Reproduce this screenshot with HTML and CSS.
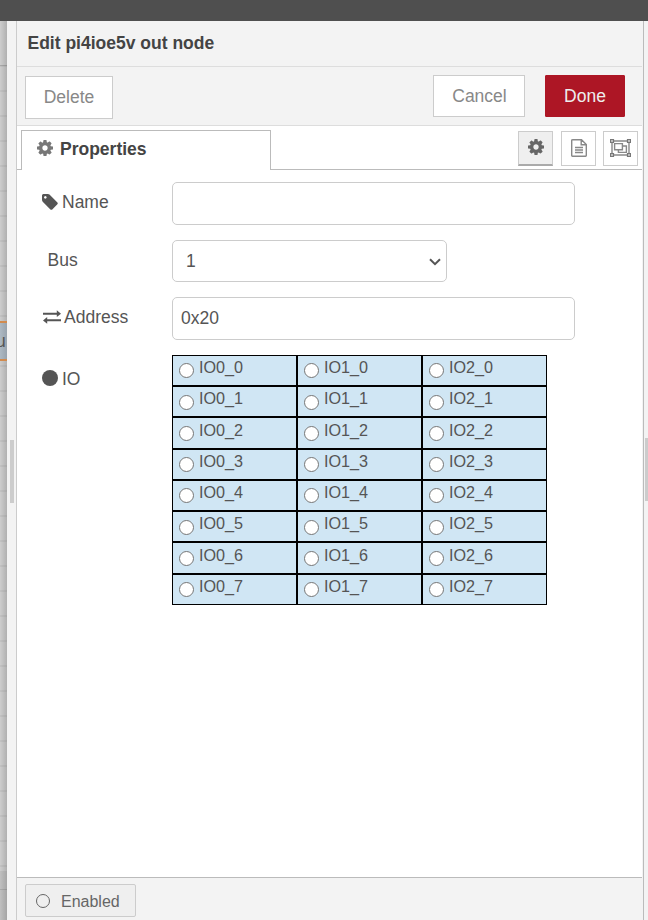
FILE: index.html
```
<!DOCTYPE html>
<html lang="en">
<head>
<meta charset="utf-8">
<title>Edit pi4ioe5v out node</title>
<link rel="stylesheet" href="styles.css">
</head>
<body>
<svg width="0" height="0" class="defs">
  <symbol id="cog" viewBox="128 128 1536 1536"><path d="M1152 896q0-106-75-181t-181-75-181 75-75 181 75 181 181 75 181-75 75-181zm512-109v222q0 12-8 23t-20 13l-185 28q-19 54-39 91 35 50 107 138 10 12 10 25t-9 23q-27 37-99 108t-94 71q-12 0-26-9l-138-108q-44 23-91 38-16 136-29 186-7 28-36 28h-222q-14 0-24.5-8.500t-11.500-21.500l-28-184q-49-16-90-37l-141 107q-10 9-25 9-14 0-25-11-126-114-165-168-7-10-7-23 0-12 8-23 15-21 51-66.500t54-70.500q-27-50-41-99l-183-27q-13-2-21-12.500t-8-23.500v-222q0-12 8-23t19-13l186-28q14-46 39-92-40-57-107-138-10-12-10-24 0-10 9-23 26-36 98.500-107.500t94.500-71.500q13 0 26 10l138 107q44-23 91-38 16-136 29-186 7-28 36-28h222q14 0 24.500 8.500t11.500 21.500l28 184q49 16 90 37l142-107q9-9 24-9 13 0 25 10 129 119 165 170 7 8 7 22 0 12-8 23-15 21-51 66.500t-54 70.500q26 50 41 98l183 28q13 2 21 12.500t8 23.500z"/></symbol>
</svg>
<div class="header"></div>
<div class="workspace">
  <div class="canvas"><div class="node"><span>u</span></div></div>
  <div class="separator"><div class="grip"></div></div>
  <div class="tray">
    <div class="title">Edit pi4ioe5v out node</div>
    <div class="toolbar">
      <button class="btn delete">Delete</button>
      <button class="btn cancel">Cancel</button>
      <button class="btn done">Done</button>
    </div>
    <div class="tabs">
      <div class="tab"><svg class="cog" width="16" height="16"><use href="#cog"/></svg>Properties</div>
      <div class="tab-buttons">
        <div class="tab-btn selected"><svg width="16" height="16"><use href="#cog"/></svg></div>
        <div class="tab-btn"><svg width="16" height="18" viewBox="0 0 16 18" fill="none" stroke="#888" stroke-width="1.4"><path d="M1.300.7H10.500L15.300 5.500V16.600Q15.300 17.300 14.600 17.300H1.400Q.7 17.300.7 16.600V1.400Q.7.7 1.400.7M10.200.9V5.800H15.100M4 8.500H12M4 11H12M4 13.500H12"/></svg></div>
        <div class="tab-btn"><svg width="21" height="18" viewBox="0 0 21 18" fill="none" stroke="#888" stroke-width="1.400"><path d="M3.500 2H17.500M3.500 16H17.500M2 3.500V14.500M19 3.500V14.500M4.600 4.600H12.400V10.800H4.600ZM12.400 7H16.400V13.400H8.400V10.800"/><path d="M.6.600H3.400V3.400H.6ZM17.600.600H20.400V3.400H17.600ZM.6 14.600H3.400V17.400H.6ZM17.600 14.600H20.400V17.400H17.600Z" stroke="#777"/></svg></div>
      </div>
    </div>
    <div class="form">
      <div class="row name">
        <label><svg class="tag" width="16" height="16" viewBox="128 128 1536 1536"><path d="M576 448q0-53-37.500-90.500t-90.500-37.500-90.500 37.500-37.500 90.500 37.500 90.500 90.500 37.500 90.500-37.500 37.500-90.500zm1067 576q0 53-37 90l-491 492q-39 37-91 37-53 0-90-37l-715-716q-38-37-64.500-101t-26.500-117v-416q0-52 38-90t90-38h416q53 0 117 26.500t102 64.500l715 714q37 39 37 91z"/></svg>Name</label>
        <input class="field" type="text">
      </div>
      <div class="row bus">
        <label>Bus</label>
        <div class="field select"><span>1</span><svg width="12" height="8" viewBox="0 0 12 8" fill="none" stroke="#555" stroke-width="2"><path d="M1 1.200L6 6.200L11 1.200"/></svg></div>
      </div>
      <div class="row address">
        <label><svg class="swap" width="18" height="14" viewBox="0 0 18 14"><path d="M0 2.800H13.800V0.300L18 3.800L13.800 7V4.800H0ZM18 9.300H4.200V7L0 10.400L4.200 13.800V11.300H18Z"/></svg>Address</label>
        <input class="field" type="text" value="0x20">
      </div>
      <div class="row io">
        <label><span class="dot"></span>IO</label>
        <div class="pins">
          <div class="pin"><input type="radio"><span>IO0_0</span></div><div class="pin"><input type="radio"><span>IO1_0</span></div><div class="pin"><input type="radio"><span>IO2_0</span></div>
          <div class="pin low"><input type="radio"><span>IO0_1</span></div><div class="pin low"><input type="radio"><span>IO1_1</span></div><div class="pin low"><input type="radio"><span>IO2_1</span></div>
          <div class="pin low tall"><input type="radio"><span>IO0_2</span></div><div class="pin low tall"><input type="radio"><span>IO1_2</span></div><div class="pin low tall"><input type="radio"><span>IO2_2</span></div>
          <div class="pin"><input type="radio"><span>IO0_3</span></div><div class="pin"><input type="radio"><span>IO1_3</span></div><div class="pin"><input type="radio"><span>IO2_3</span></div>
          <div class="pin"><input type="radio"><span>IO0_4</span></div><div class="pin"><input type="radio"><span>IO1_4</span></div><div class="pin"><input type="radio"><span>IO2_4</span></div>
          <div class="pin low"><input type="radio"><span>IO0_5</span></div><div class="pin low"><input type="radio"><span>IO1_5</span></div><div class="pin low"><input type="radio"><span>IO2_5</span></div>
          <div class="pin low tall"><input type="radio"><span>IO0_6</span></div><div class="pin low tall"><input type="radio"><span>IO1_6</span></div><div class="pin low tall"><input type="radio"><span>IO2_6</span></div>
          <div class="pin"><input type="radio"><span>IO0_7</span></div><div class="pin"><input type="radio"><span>IO1_7</span></div><div class="pin"><input type="radio"><span>IO2_7</span></div>
        </div>
      </div>
    </div>
    <div class="footer"><button class="enabled"><span class="ring"></span><span class="state">Enabled</span></button></div>
  </div>
  <div class="sidebar"><div class="grip"></div></div>
</div>
</body>
</html>
```
FILE: styles.css
```
* { box-sizing: border-box; }
body {
  margin: 0;
  height: 920px;
  overflow: hidden;
  display: flex;
  flex-direction: column;
  font: 17.5px/20px "Liberation Sans", Arial, sans-serif;
  color: #555;
}
button, input { font: inherit; color: inherit; }
svg { display: block; flex: none; }
.defs { position: absolute; }
.header { height: 21px; flex: none; background: #4f4f4f; }
.workspace { flex: 1; display: flex; min-height: 0; }

.canvas {
  width: 7px;
  overflow: hidden;
  padding-top: 300px;
  background:
    linear-gradient(90deg, transparent, rgba(0,0,0,.14)),
    linear-gradient(#aaa, #aaa) 0 44px / 100% 1px no-repeat,
    linear-gradient(#aaa, #aaa) 0 868px / 100% 1px no-repeat,
    linear-gradient(#c0c0c0, #c0c0c0) 0 850px / 100% 49px no-repeat,
    linear-gradient(#cdcdcd, #cdcdcd) 0 0 / 100% 44px no-repeat,
    repeating-linear-gradient(#cdcdcd 0 19px, #c3c3c3 19px 21px, #cdcdcd 21px 25px);
}
.node {
  height: 40px;
  border: solid #d18b4f;
  border-width: 2px 0;
  background: linear-gradient(90deg, #adb9c3, #98a3ad);
  color: #555;
  padding-top: 8px;
}
.node span { margin-left: -4px; }

.separator {
  width: 10px;
  background: #f3f3f3;
  border-right: 1px solid #ccc;
  padding: 419px 0 0 3px;
}
.separator .grip { width: 4px; height: 63px; background: #ccc; }

.tray {
  width: 626px;
  display: flex;
  flex-direction: column;
  background: #fff;
  border-right: 1px solid #f3f3f3;
}
.title {
  height: 46px;
  padding: 12px 0 0 10.5px;
  font-weight: bold;
  color: #444;
  background: #f3f3f3;
  border-bottom: 1px solid #ddd;
}
.toolbar {
  height: 59px;
  display: flex;
  padding: 8px 17px 0 8px;
  background: #f3f3f3;
  border-bottom: 1px solid #ddd;
}
.btn {
  height: 42px;
  padding: 0;
  background: #fff;
  border: 1px solid #ccc;
  color: #888;
}
.delete { width: 88px; height: 43px; margin: 1px auto 0 0; padding-bottom: 2px; }
.cancel { width: 92px; margin-right: 20px; padding-left: 1px; }
.done { width: 80px; background: #ad1625; border-color: #ad1625; color: #eee; border-radius: 1px; }

.tabs {
  height: 44px;
  display: flex;
  justify-content: space-between;
  padding: 4px 4px 0;
  box-shadow: inset 0 -1px #bbb;
}
.tab {
  width: 250px;
  height: 40px;
  display: flex;
  padding: 8px 0 0 15px;
  border: 1px solid #bbb;
  border-bottom: 0;
  background: #fff;
  font-weight: bold;
  color: #444;
}
.cog { fill: #777; margin: 1px 7px 0 0; }
.tab-buttons { display: flex; gap: 8px; padding-top: 1px; }
.tab-btn {
  width: 35px;
  height: 35px;
  display: flex;
  justify-content: center;
  padding-top: 7px;
  border: 1px solid #ccc;
}
.tab-btn:last-child { margin-left: -1px; }
.tab-btn.selected { background: #efefef; border-bottom: 2px solid #aaa; fill: #666; }
.tab-btn.selected svg { margin: 0 -1px 0 0; }

.form { flex: 1; padding: 12px 0 0 25px; }
.row { display: flex; align-items: flex-start; }
.row label { width: 130px; display: flex; fill: #555; }
.name { height: 58px; }
.bus { height: 57px; }
.address { height: 58px; }
.name label { padding-top: 10px; }
.bus label { padding: 10px 0 0 5.5px; }
.address label { padding-top: 10px; }
.io label { padding-top: 14px; }
.tag { margin: 2px 4px 0 0; }
.swap { margin: 3px 3.5px 0 .5px; }
.dot { width: 16px; height: 16px; border-radius: 50%; background: #555; margin: 1px 4px 0 0; }
.field {
  width: 403px;
  height: 43px;
  padding: 0 8px 1px;
  border: 1px solid #ccc;
  border-radius: 5px;
  background: #fff;
  outline: 0;
}
.select {
  width: 275px;
  height: 42px;
  display: flex;
  align-items: center;
  justify-content: space-between;
  padding: 0 5px 1px 13px;
}
.select svg { margin-top: 3px; }

.pins {
  display: grid;
  grid-template-columns: repeat(3, 125px);
  font-size: 16.2px;
}
.pin {
  height: 31px;
  display: flex;
  align-items: flex-start;
  border: 1px solid #000;
  background: #d0e6f4;
  padding-left: 6px;
}
.pin input {
  appearance: none;
  width: 15px;
  height: 15px;
  margin: 7px 5px 0 0;
  border: 1px solid #767676;
  border-radius: 50%;
  background: #fff;
}
.pin span { margin-top: 1px; }
.low input { margin-top: 8px; }
.tall { height: 32px; }
.tall span { margin-top: 2px; }

.footer {
  height: 43px;
  padding: 6px 8px 0;
  background: #f3f3f3;
  border-top: 1px solid #bbb;
}
.enabled {
  width: 111px;
  height: 33px;
  display: flex;
  align-items: center;
  padding: 1px 0 0 10px;
  border: 1px solid #ccc;
  border-radius: 2px;
  background: #efefef;
  color: #666;
  font-size: 16px;
}
.state { padding-top: 2px; }
.ring { width: 14px; height: 14px; border: 1.5px solid #666; border-radius: 50%; margin-right: 11px; }

.sidebar { flex: 1; background: #f3f3f3; border-left: 1px solid #bbb; padding: 417px 0 0 1px; }
.sidebar .grip { height: 63px; background: #ccc; }
```
